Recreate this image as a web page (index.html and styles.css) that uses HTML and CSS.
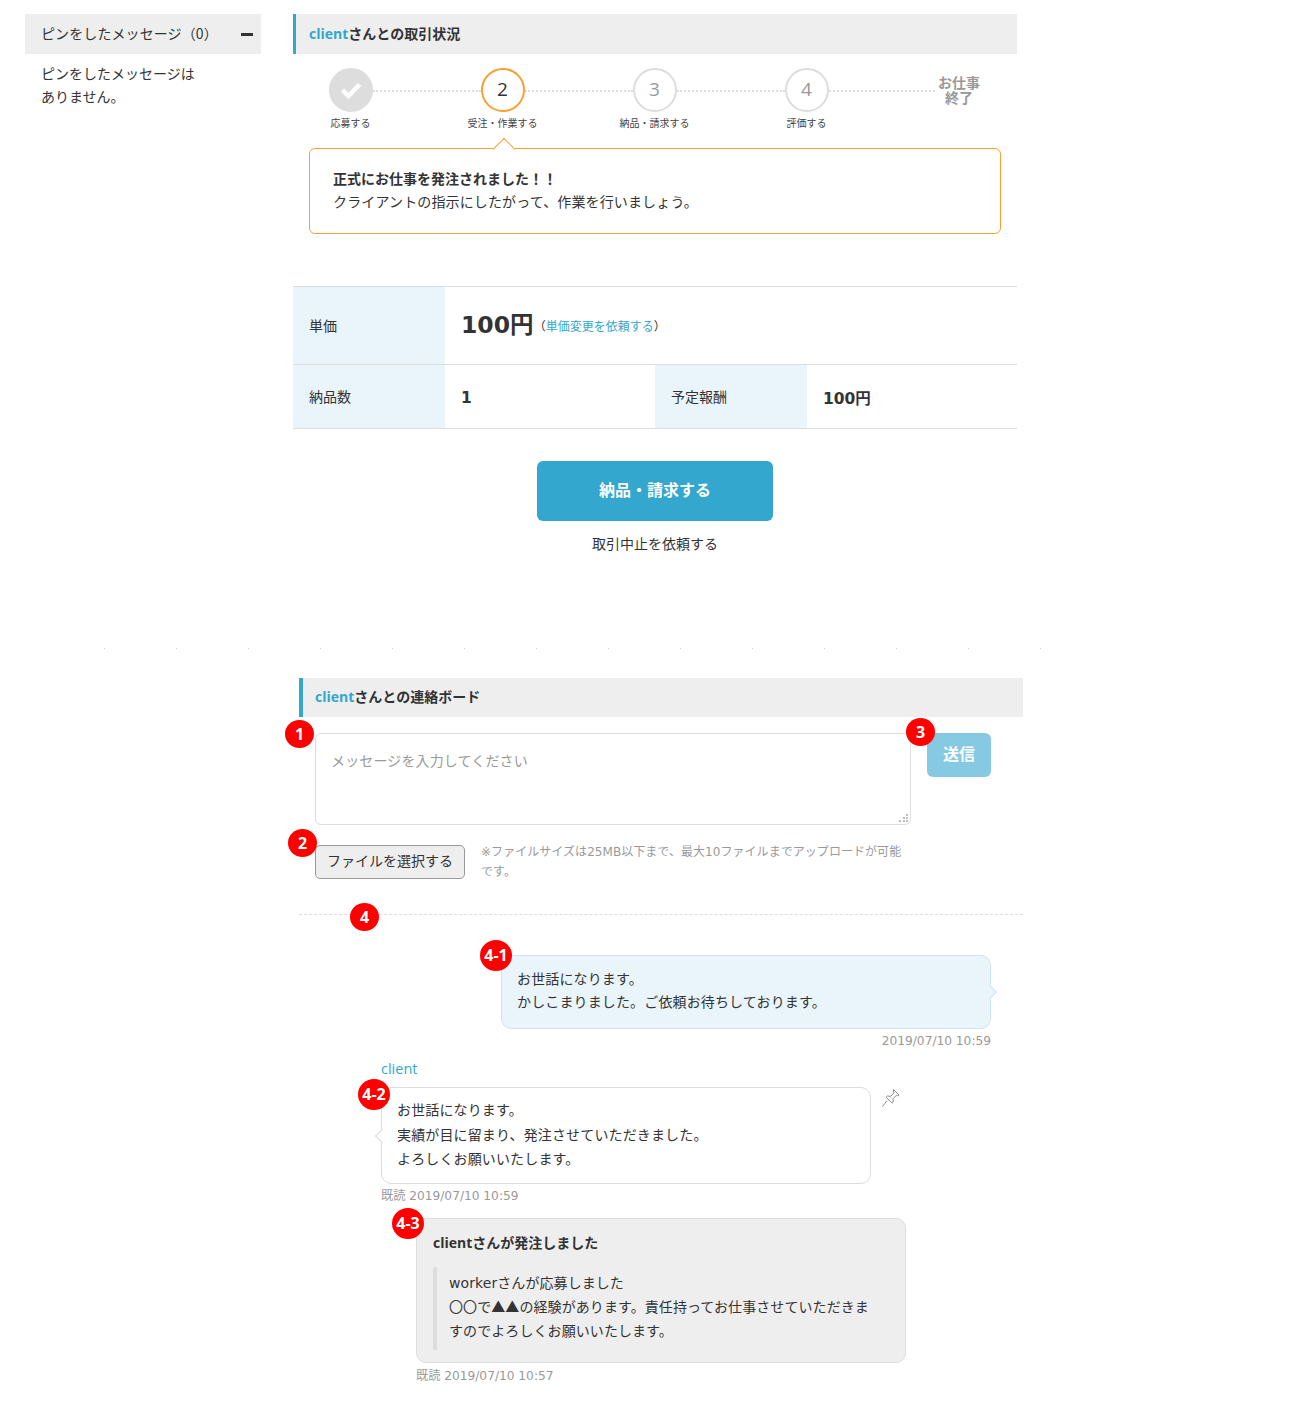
FILE: index.html
```html
<!DOCTYPE html>
<html lang="ja">
<head>
<meta charset="utf-8">
<title>取引状況</title>
<link rel="stylesheet" href="styles.css">
</head>
<body>
<div class="upper">
  <aside class="side">
    <div class="side-head"><span>ピンをしたメッセージ（0）</span><i class="minus"></i></div>
    <p class="side-empty">ピンをしたメッセージは<br>ありません。</p>
  </aside>
  <main class="deal">
    <h2 class="heading"><span class="name">client</span>さんとの取引状況</h2>
    <div class="steps">
      <div class="step"><div class="circle done"><svg width="24" height="20" viewBox="0 0 24 20"><path d="M3.500 10l6 6L20.500 4.500" fill="none" stroke="#fff" stroke-width="4.500"/></svg></div><span class="step-label">応募する</span></div>
      <div class="line"></div>
      <div class="step"><div class="circle now">2</div><span class="step-label">受注・作業する</span></div>
      <div class="line"></div>
      <div class="step"><div class="circle">3</div><span class="step-label">納品・請求する</span></div>
      <div class="line"></div>
      <div class="step"><div class="circle">4</div><span class="step-label">評価する</span></div>
      <div class="line last"></div>
      <div class="finish">お仕事<br>終了</div>
    </div>
    <div class="notice">
      <strong>正式にお仕事を発注されました！！</strong><br>
      クライアントの指示にしたがって、作業を行いましょう。
    </div>
    <table class="info">
      <colgroup><col class="c-head"><col class="c-val"><col class="c-head"><col class="c-val"></colgroup>
      <tr class="row-a"><th>単価</th><td colspan="3" class="price-cell"><b class="price">100円</b> <small class="change">（<a>単価変更を依頼する</a>）</small></td></tr>
      <tr class="row-b"><th>納品数</th><td class="val"><b>1</b></td><th>予定報酬</th><td class="val"><b>100円</b></td></tr>
    </table>
    <div class="actions">
      <a class="primary">納品・請求する</a>
      <a class="cancel">取引中止を依頼する</a>
    </div>
  </main>
</div>
<div class="dots"></div>
<section class="board">
  <h2 class="heading tall"><span class="name">client</span>さんとの連絡ボード</h2>
  <div class="compose">
    <div class="area-wrap">
      <span class="badge b1">1</span>
      <textarea class="area" placeholder="メッセージを入力してください"></textarea>
      <svg class="grip" width="9" height="8" viewBox="0 0 9 8"><path d="M7 0h2v2H7zM4 3h2v2H4zM7 3h2v2H7zM0 6h2v2H0zM4 6h2v2H4zM7 6h2v2H7z" fill="#bbb"/></svg>
    </div>
    <div class="send-wrap">
      <span class="badge b3">3</span>
      <button class="send">送信</button>
    </div>
  </div>
  <div class="files">
    <div class="file-wrap"><span class="badge b2">2</span><button class="file">ファイルを選択する</button></div>
    <p class="note">※ファイルサイズは25MB以下まで、最大10ファイルまでアップロードが可能です。</p>
  </div>
  <div class="rule"><span class="badge b4">4</span></div>
  <div class="msg mine">
    <div class="bubble blue"><span class="badge b41">4-1</span>お世話になります。<br>かしこまりました。ご依頼お待ちしております。</div>
    <div class="time right">2019/07/10 10:59</div>
  </div>
  <div class="msg theirs">
    <div class="sender">client</div>
    <div class="bubble white"><span class="badge b42">4-2</span>お世話になります。<br>実績が目に留まり、発注させていただきました。<br>よろしくお願いいたします。
      <svg class="pin" width="20" height="20" viewBox="0 0 20 20"><path d="M12.500 1.500l5.500 5.500-1.500 .8-1-.6-3.500 3.500.3 3.300-1.200 1.200-6-6 1.200-1.200 3.300.3 3.500-3.500-.6-1z M6 12.500L1.500 18.500" fill="none" stroke="#888" stroke-width="1"/></svg>
    </div>
    <div class="time">既読 2019/07/10 10:59</div>
  </div>
  <div class="msg system">
    <div class="bubble gray"><span class="badge b43">4-3</span>
      <div class="sys-title"><span class="latin">client</span>さんが発注しました</div>
      <blockquote class="quote">workerさんが応募しました<br>〇〇で<span class="cjk">▲▲</span>の経験があります。責任持ってお仕事させていただきますのでよろしくお願いいたします。</blockquote>
    </div>
    <div class="time">既読 2019/07/10 10:57</div>
  </div>
</section>
</body>
</html>
```
FILE: styles.css
```css
* { box-sizing: border-box; }
html, body { margin: 0; padding: 0; background: #fff; }
body {
  height: 1428px;
  overflow: hidden;
  font-family: "DejaVu Sans", "Noto Sans CJK JP", sans-serif;
  font-size: 14px;
  color: #333;
}
h2, p, blockquote { margin: 0; }

.upper { display: flex; gap: 32px; padding: 14px 0 0 25px; }
.side { width: 236px; flex: none; }
.side-head {
  height: 40px; background: #eee; padding: 0 8px 2px 16px; letter-spacing: .1px;
  display: flex; align-items: center; justify-content: space-between;
  font-family: "Noto Sans CJK JP", sans-serif;
}
.minus { width: 12px; height: 3px; background: #333; display: block; margin-top: 2px; }
.side-empty { padding: 0 16px; margin-top: 8px; line-height: 23px; font-family: "Noto Sans CJK JP", sans-serif; }

.deal { width: 724px; flex: none; }
.heading {
  height: 40px; line-height: 39px; background: #eee; border-left: 3px solid #33a7cd;
  padding-left: 13px; font-size: 14px; font-weight: 700; color: #333;
}
.name { color: #33a7cd; font-family: "Open Sans", sans-serif; }
.latin { font-family: "Open Sans", sans-serif; }
.heading.tall { height: 39px; border-left-width: 4px; padding-left: 12px; line-height: 38px; }

.steps { display: flex; align-items: flex-start; padding: 14px 0 0 36px; height: 84px; }
.step { width: 44px; flex: none; display: flex; flex-direction: column; align-items: center; }
.circle {
  width: 44px; height: 44px; border-radius: 50%; border: 2px solid #ddd;
  display: flex; align-items: center; justify-content: center;
  font-size: 19px; line-height: 1; padding: 0 1px 2px 0; color: #999; background: #fff; font-family: "Open Sans", sans-serif;
}
.circle.done { background: #ddd; padding: 0; }
.circle.now { border-color: #f9a02e; color: #333; }
.step-label { margin-top: 4px; padding-right: 1px; font-size: 10px; line-height: 14px; white-space: nowrap; font-family: "Noto Sans CJK JP", sans-serif; color: #444; }
.line { width: 108px; flex: none; margin-top: 22px; border-top: 2px dotted #ddd; }
.line.last { width: 106px; }
.finish {
  width: 46px; flex: none; margin: 7px 0 0 1px; text-align: center;
  font-size: 14px; line-height: 15px; font-weight: 700; color: #999;
  font-family: "Noto Sans CJK JP", sans-serif;
}

.notice {
  position: relative; margin: 10px 16px 0; height: 86px; padding: 18px 23px;
  border: 1px solid #f9a02e; border-radius: 6px; line-height: 23px; background: #fff; letter-spacing: .14px;
  font-family: "Noto Sans CJK JP", sans-serif;
}
.notice strong { letter-spacing: 0; }
.notice::before {
  content: ""; position: absolute; left: 186px; top: -8px; width: 15px; height: 15px;
  background: #fff; border: 1px solid #f9a02e; border-right: 0; border-bottom: 0;
  transform: rotate(45deg);
}

.info {
  width: 724px; margin-top: 52px; border-collapse: collapse; table-layout: fixed;
  font-family: "Noto Sans CJK JP", sans-serif;
}
.c-head { width: 152px; }
.c-val { width: 210px; }
.info tr { border-top: 1px solid #ddd; border-bottom: 1px solid #ddd; }
.info th {
  background: #e9f5fa; font-weight: 400; text-align: left; padding: 0 16px 2px;
}
.info td { padding: 0 16px; }
.row-a { height: 78px; }
.row-b { height: 64px; }
.val b, .price { font-family: "DejaVu Sans", "Noto Sans CJK JP", sans-serif; }
.val b { font-size: 15.5px; }
.info .price-cell { padding-bottom: 6px; }
.price { font-size: 23.500px; }
.change { font-size: 12px; margin-left: -3px; vertical-align: 2px; }
.change a { color: #33a7cd; }

.actions { display: flex; flex-direction: column; align-items: center; margin-top: 32px; }
.primary {
  width: 236px; height: 60px; border-radius: 6px; background: #33a7cd; color: #fff; padding-bottom: 5px;
  font-size: 16px; font-weight: 700; display: flex; align-items: center; justify-content: center;
  font-family: "Noto Sans CJK JP", sans-serif;
}
.cancel { margin-top: 12px; line-height: 20px; font-family: "Noto Sans CJK JP", sans-serif; }

.dots {
  height: 1px; margin: 95px 0 0 104px; width: 937px;
  background: repeating-linear-gradient(90deg, #ccc 0 1px, transparent 1px 72px);
}

.board { width: 724px; margin: 29px 0 0 299px; }

.compose { display: flex; gap: 16px; padding: 16px 32px 0 16px; }
.area-wrap, .send-wrap, .file-wrap { position: relative; }
.area {
  display: block; width: 596px; height: 92px; border: 1px solid #ddd; border-radius: 6px; resize: none; letter-spacing: .14px;
  padding: 14px 15px; font: 14px/24px "Noto Sans CJK JP", sans-serif; outline: 0; background: #fff;
}
.area::placeholder { color: #999; opacity: 1; }
.grip { position: absolute; right: 3px; bottom: 3px; }
.send {
  display: block; width: 64px; height: 44px; border: 0; border-radius: 6px; background: #85c9e2; color: #fff;
  font: 700 16px "Noto Sans CJK JP", sans-serif; padding: 0 0 4px;
}

.files { display: flex; gap: 16px; padding: 20px 0 0 16px; }
.file {
  display: block; width: 150px; height: 34px; border: 1px solid #999; border-radius: 5px; background: #eee;
  font: 14px "Noto Sans CJK JP", sans-serif; color: #333; padding: 0 0 4px;
}
.note {
  width: 424px; font-size: 12px; line-height: 20px; color: #999; margin-top: -3px; letter-spacing: .05px;
  font-family: "DejaVu Sans", "Noto Sans CJK JP", sans-serif;
}

.rule { position: relative; margin-top: 32px; height: 1px; border-top: 1px dashed #ddd; }

.msg { position: relative; }
.bubble {
  position: relative; width: 490px; border-radius: 10px; line-height: 24px; letter-spacing: .14px;
  font-family: "Noto Sans CJK JP", sans-serif;
}
.mine { margin: 40px 0 0 202px; width: 490px; }
.blue { background: #e9f5fa; border: 1px solid #cfe4ee; padding: 11px 15px; height: 74px; line-height: 23px; }
.blue::after {
  content: ""; position: absolute; right: -5px; top: 31px; width: 9px; height: 9px;
  background: #e9f5fa; border: 1px solid #cfe4ee; border-left: 0; border-bottom: 0; transform: rotate(45deg);
}
.theirs { margin: 9px 0 0 82px; width: 490px; }
.sender { color: #33a7cd; font: 14.500px/20px "Open Sans", sans-serif; height: 20px; }
.white { background: #fff; border: 1px solid #ddd; padding: 9px 15px; height: 97px; margin-top: 8px; line-height: 24.500px; }
.white::before {
  content: ""; position: absolute; left: -5px; top: 43px; width: 9px; height: 9px;
  background: #fff; border: 1px solid #ddd; border-right: 0; border-top: 0; transform: rotate(45deg);
}
.pin { position: absolute; left: 499px; top: 0; }
.system { margin: 13px 0 0 117px; width: 490px; }
.gray { background: #eee; border: 1px solid #ddd; height: 145px; padding: 12px 16px; letter-spacing: 0; }
.sys-title { font-weight: 700; font-family: "DejaVu Sans", "Noto Sans CJK JP", sans-serif; }
.quote {
  margin-top: 12px; border-left: 4px solid #ddd; padding: 4px 20px 6px 12px; border-radius: 2px; letter-spacing: .08px;
  height: 83px; font-family: "DejaVu Sans", "Noto Sans CJK JP", sans-serif;
}
.cjk { font-family: "Noto Sans CJK JP", sans-serif; line-height: 1; }
.time { font: 12.200px/18px "DejaVu Sans", "Noto Sans CJK JP", sans-serif; color: #999; margin-top: 3px; }
.time.right { text-align: right; }
.system .time { margin-top: 4px; }

.badge {
  position: absolute; z-index: 2; width: 29px; height: 28px; border-radius: 50%; background: #f00; color: #fff; letter-spacing: 0;
  font: 700 16px/28px "Open Sans", sans-serif; text-align: center; white-space: nowrap;
}
.b1 { left: -30px; top: -13px; }
.b2 { left: -27px; top: -16px; }
.b3 { left: -21px; top: -15px; }
.b4 { left: 51px; top: -12px; }
.b41, .b42, .b43 { width: 32px; height: 31px; line-height: 31px; }
.b41 { left: -22px; top: -16px; }
.b42 { left: -24px; top: -9px; }
.b43 { left: -25px; top: -11px; }
```
